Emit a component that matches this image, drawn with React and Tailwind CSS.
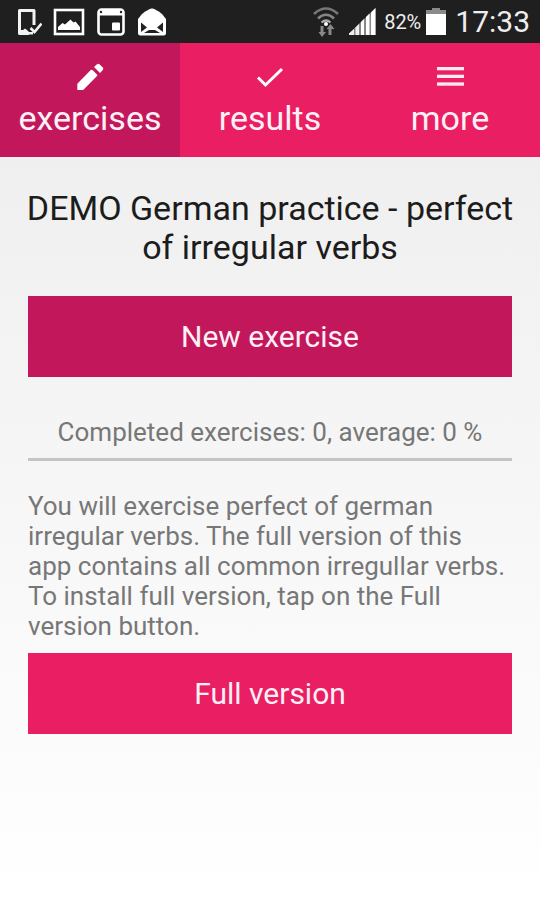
import React from "react";

function PencilIcon() {
  return (
    <svg width="36" height="36" viewBox="0 0 36 36" fill="#fff">
      <path d="M5.300 31V25.400Q5.300 24.800 5.800 24.300L18.800 11.100Q19.700 10.300 20.500 11.100L25 15.500Q25.700 16.300 25 17.100L11.700 30.500Q11.200 31 10.600 31Z" />
      <path d="M22 8L25 5.300Q26.300 4.300 27.500 5.300L30.800 8.600Q31.700 9.800 30.800 11L28 14Z" />
    </svg>
  );
}

function CheckIcon() {
  return (
    <svg width="36" height="36" viewBox="0 0 36 36" fill="none">
      <path d="M6 18.500L13.500 26L30 10" stroke="#fff" strokeWidth="3" />
    </svg>
  );
}

function MenuIcon() {
  return (
    <svg width="36" height="36" viewBox="0 0 36 36" fill="#ffeaf2">
      <rect x="5" y="8" width="27" height="3.300" />
      <rect x="5" y="15.700" width="27" height="3.300" />
      <rect x="5" y="23.400" width="27" height="3.300" />
    </svg>
  );
}

const tabs = [
  { label: "exercises", Icon: PencilIcon, active: true },
  { label: "results", Icon: CheckIcon, active: false },
  { label: "more", Icon: MenuIcon, active: false },
];

function DeviceIcon() {
  return (
    <svg width="26" height="28" viewBox="0 0 26 28" fill="none">
      <path
        d="M18 17V2.500H3.500V25.500H13"
        stroke="#f2f2f2"
        strokeWidth="3"
        strokeLinejoin="round"
      />
      <path d="M4 22H7L9 20.500L11 22L13 24H17V26.500H4Z" fill="#f2f2f2" />
      <path d="M14.500 20L18.500 24L25.500 15.500" stroke="#f2f2f2" strokeWidth="2.600" />
    </svg>
  );
}

function PictureIcon() {
  return (
    <svg width="32" height="28" viewBox="0 0 32 28" fill="none">
      <rect x="2" y="2" width="28" height="24" stroke="#fff" strokeWidth="2.600" />
      <path
        d="M5 22V19L9.500 15L12 16.500L17.500 11.500L20.500 14.500L22.500 13.500L27 19V22Z"
        fill="#fff"
      />
    </svg>
  );
}

function CalendarIcon() {
  return (
    <svg width="30" height="30" viewBox="0 0 30 30" fill="none">
      <rect x="2.500" y="2.500" width="25" height="25" rx="3" stroke="#fff" strokeWidth="2.600" />
      <path d="M2 3H28V8.500H2Z" fill="#fff" />
      <circle cx="5" cy="5" r="1.200" fill="#222" />
      <circle cx="25" cy="5" r="1.200" fill="#222" />
      <rect x="16" y="15.500" width="8" height="8" rx="1" fill="#fff" />
    </svg>
  );
}

function MailIcon() {
  return (
    <svg width="30" height="30" viewBox="0 0 30 30">
      <path
        d="M1 12L5 7Q12 1.500 15 1.500T25 7L29 12V26Q29 28.500 26.500 28.500H3.500Q1 28.500 1 26Z"
        fill="#fff"
      />
      <path d="M4 15.500L10 20.500L4 25Z" fill="#222" />
      <path d="M26 15.500L20 20.500L26 25Z" fill="#222" />
      <path d="M7 26L12 23H18L23 26Z" fill="#222" />
    </svg>
  );
}

function WifiIcon() {
  return (
    <svg width="28" height="32" viewBox="0 0 28 32" fill="none">
      <path d="M2 8Q14 -3 26 8" stroke="#777" strokeWidth="2.600" />
      <path d="M6 12.500Q14 5 22 12.500" stroke="#858585" strokeWidth="2.600" />
      <path d="M9.500 16.500Q14 12.500 18.500 16.500" stroke="#aaa" strokeWidth="2.200" />
      <circle cx="14" cy="18" r="2" fill="#fff" />
      <path d="M8.500 20H11.500V26H14L10 31L6.500 26H8.500Z" fill="#888" />
      <path d="M16.500 29V23H14.500L18.500 18L22.500 23H19.500V29Z" fill="#888" />
    </svg>
  );
}

function SignalIcon() {
  return (
    <svg width="28" height="28" viewBox="0 0 28 28">
      <path d="M1 27V25.500L27.500 0V27Z" fill="#888" />
      <path d="M1 27V25.500L6 21V27Z" fill="#eee" />
      <path d="M7.500 27V19.500L11 16V27Z" fill="#eee" />
      <path d="M13 27V14L16 11V27Z" fill="#fff" />
      <path d="M18 27V9L21.500 5.500V27Z" fill="#fff" />
      <path d="M23 27V4.500L27.500 0V27Z" fill="#fff" />
    </svg>
  );
}

function BatteryIcon() {
  return (
    <svg width="22" height="28" viewBox="0 0 22 28">
      <path d="M7 0H15V2H21V6H1V2H7Z" fill="#8a8a8a" />
      <rect x="1" y="6" width="20" height="21" fill="#fff" />
    </svg>
  );
}

function StatusBar() {
  return (
    <div className="flex items-center justify-between h-[43px] pl-4 pr-[10px] bg-[#1f1f1f] text-[#eeeeee]">
      <div className="flex items-center gap-[11px]">
        <DeviceIcon />
        <PictureIcon />
        <CalendarIcon />
        <MailIcon />
      </div>
      <div className="flex items-center">
        <WifiIcon />
        <div className="ml-2">
          <SignalIcon />
        </div>
        <span className="ml-2 text-[20px]">82%</span>
        <div className="ml-1 mr-2">
          <BatteryIcon />
        </div>
        <span className="text-[30px]">17:33</span>
      </div>
    </div>
  );
}

function Tabs() {
  return (
    <nav className="grid grid-cols-3 bg-[#e91e63] text-[#fff0f6]">
      {tabs.map(({ label, Icon, active }) => (
        <button
          key={label}
          type="button"
          className={
            active
              ? "flex flex-col items-center h-[114px] pt-4 bg-[#c2185b] cursor-pointer"
              : "flex flex-col items-center h-[114px] pt-4 cursor-pointer"
          }
        >
          <Icon />
          <span className="text-[34px] leading-[46px]">{label}</span>
        </button>
      ))}
    </nav>
  );
}

function App() {
  return (
    <div className="min-h-screen flex flex-col bg-linear-to-b from-[#ececec] to-white font-['Roboto',sans-serif]">
      <StatusBar />
      <Tabs />
      <main className="flex flex-col px-7 pt-8">
        <h1 className="-mx-2 text-[34px] leading-[39px] text-center text-[#1c1c1c]">
          DEMO German practice - perfect of irregular verbs
        </h1>
        <button
          type="button"
          className="mt-[29px] h-[81px] bg-[#c2185b] text-[30px] text-[#fff0f6] cursor-pointer"
        >
          New exercise
        </button>
        <p className="mt-10 pb-[11px] border-b-3 border-[#c4c4c4] text-[26px] leading-[30px] text-center text-[#777777]">
          Completed exercises: 0, average: 0 %
        </p>
        <p className="mt-[30px] text-[26px] leading-[30px] text-[#777777]">
          You will exercise perfect of german irregular verbs. The full version
          of this app&nbsp;contains all common irregullar verbs. To install full
          version, tap on the Full version button.
        </p>
        <button
          type="button"
          className="mt-3 h-[81px] bg-[#e91e63] text-[30px] text-[#fff0f6] cursor-pointer"
        >
          Full version
        </button>
      </main>
    </div>
  );
}

export default App;
